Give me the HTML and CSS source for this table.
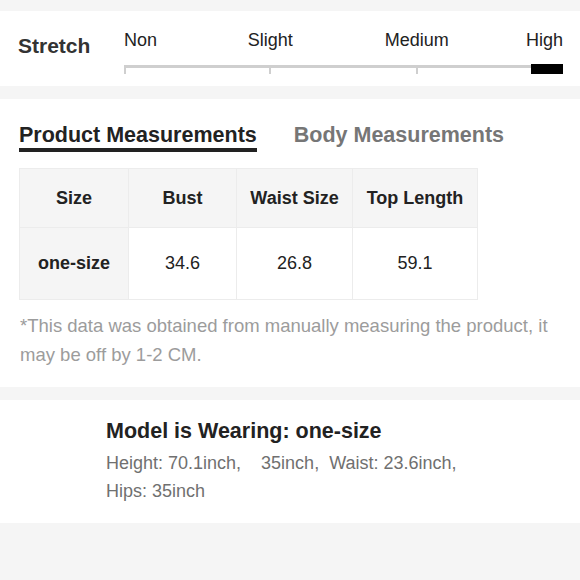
FILE: index.html
```html
<!DOCTYPE html>
<html lang="en">
<head>
<meta charset="utf-8">
<title>Size info</title>
<link rel="stylesheet" href="styles.css">
</head>
<body>
  <section class="stretch">
    <div class="stretch-label">Stretch</div>
    <div class="scale">
      <div class="scale-labels">
        <span class="lbl lbl-non">Non</span>
        <span class="lbl lbl-slight">Slight</span>
        <span class="lbl lbl-medium">Medium</span>
        <span class="lbl lbl-high">High</span>
      </div>
      <div class="track">
        <span class="tick tick-1"></span>
        <span class="tick tick-2"></span>
        <span class="tick tick-3"></span>
        <span class="marker"></span>
      </div>
    </div>
  </section>

  <section class="measure">
    <div class="tabs">
      <div class="tab tab-active">Product Measurements</div>
      <div class="tab">Body Measurements</div>
    </div>
    <table class="size-table">
      <colgroup>
        <col class="c1"><col class="c2"><col class="c3"><col class="c4">
      </colgroup>
      <thead>
        <tr><th>Size</th><th>Bust</th><th>Waist Size</th><th>Top Length</th></tr>
      </thead>
      <tbody>
        <tr><th class="row-head">one-size</th><td>34.6</td><td>26.8</td><td>59.1</td></tr>
      </tbody>
    </table>
    <p class="note">*This data was obtained from manually measuring the product, it may be off by 1-2 CM.</p>
  </section>

  <section class="model">
    <h2 class="model-title">Model is Wearing: one-size</h2>
    <p class="model-info">Height: 70.1inch,&nbsp;&nbsp;&nbsp; 35inch,&nbsp; Waist: 23.6inch, Hips: 35inch</p>
  </section>
</body>
</html>
```
FILE: styles.css
```css
html, body {
  margin: 0;
  padding: 0;
}
body {
  background: #f5f5f5;
  font-family: "Liberation Sans", Arial, Helvetica, sans-serif;
  color: #222;
  width: 580px;
  height: 580px;
  overflow: hidden;
}

/* Stretch */
.stretch {
  margin-top: 11px;
  background: #fff;
  height: 75px;
  display: flex;
  align-items: flex-start;
  padding: 0 17px 0 18px;
  box-sizing: border-box;
}
.stretch-label {
  width: 106px;
  flex: none;
  font-size: 21px;
  line-height: 24px;
  font-weight: bold;
  color: #333;
  padding-top: 23px;
}
.scale {
  flex: 1;
  padding-top: 18px;
}
.scale-labels {
  display: grid;
  grid-template-columns: repeat(6, 1fr);
  font-size: 18px;
  line-height: 22px;
  color: #222;
}
.lbl { white-space: nowrap; }
.lbl-non { grid-column: 1; justify-self: start; }
.lbl-slight { grid-column: 2 / 4; justify-self: center; }
.lbl-medium { grid-column: 4 / 6; justify-self: center; }
.lbl-high { grid-column: 6; justify-self: end; }

.track {
  position: relative;
  height: 10px;
  margin-top: 14px;
}
.track::before {
  content: "";
  display: block;
  margin-top: 3px;
  height: 3px;
  background: #cfcfcf;
}
.tick {
  position: absolute;
  top: 2px;
  width: 2px;
  height: 7px;
  background: #cfcfcf;
}
.tick-1 { left: 0; }
.tick-2 { left: calc(33.333% - 1px); }
.tick-3 { left: calc(66.667% - 1px); }
.marker {
  position: absolute;
  right: 0;
  top: -1px;
  width: 32px;
  height: 10px;
  background: #000;
}

/* Measurements */
.measure {
  margin-top: 13px;
  background: #fff;
  padding: 24px 20px 17px 19px;
}
.tabs {
  display: flex;
  gap: 37px;
}
.tab {
  font-size: 21.5px;
  line-height: 24px;
  font-weight: bold;
  color: #767676;
  padding-bottom: 1px;
  white-space: nowrap;
}
.tab-active {
  color: #222;
  border-bottom: 4px solid #222;
}

.size-table {
  margin-top: 16px;
  border-collapse: collapse;
  table-layout: fixed;
  width: 458px;
  font-size: 18px;
}
.c1 { width: 109px; }
.c2 { width: 108px; }
.c3 { width: 116px; }
.c4 { width: 125px; }
.size-table th,
.size-table td {
  border: 1px solid #ececec;
  text-align: center;
  padding: 0;
  white-space: nowrap;
}
.size-table thead th {
  background: #f5f5f5;
  height: 58px;
  font-weight: bold;
  color: #222;
}
.size-table tbody th,
.size-table tbody td {
  height: 71px;
}
.size-table .row-head {
  background: #f5f5f5;
  font-weight: bold;
  color: #222;
}
.size-table td {
  font-weight: normal;
  color: #222;
}

.note {
  margin: 12px 0 0 1px;
  font-size: 18.5px;
  line-height: 28.8px;
  color: #9c9c9c;
}

/* Model */
.model {
  margin-top: 13px;
  background: #fff;
  padding: 19px 106px 18px 106px;
}
.model-title {
  margin: 0;
  font-size: 21.5px;
  line-height: 24px;
  font-weight: bold;
  color: #222;
}
.model-info {
  margin: 6px 0 0;
  font-size: 18px;
  line-height: 28px;
  color: #707070;
}
```
